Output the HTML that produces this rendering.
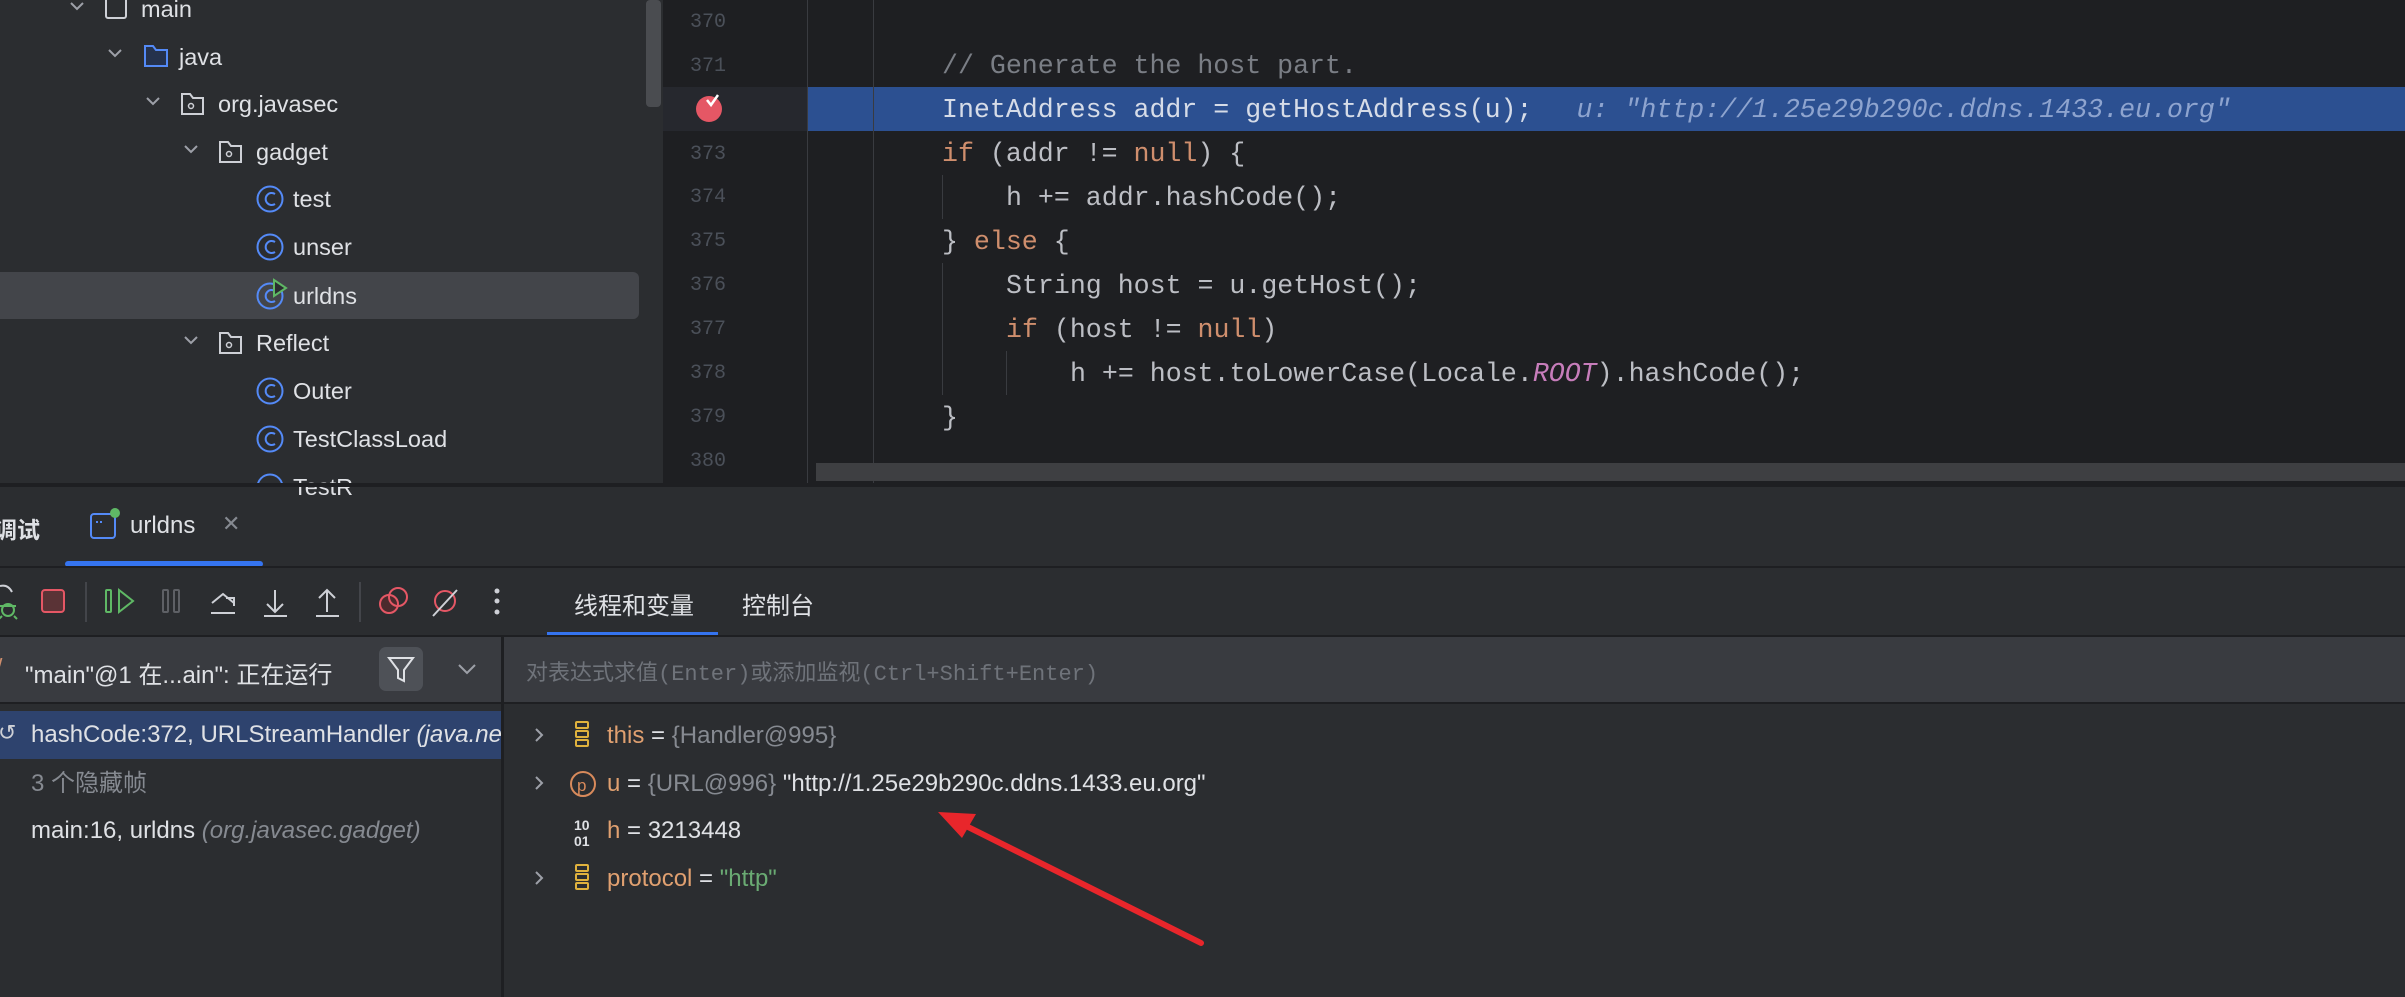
<!DOCTYPE html>
<html><head><meta charset="utf-8"><style>
*{margin:0;padding:0;box-sizing:border-box}
body{width:2405px;height:997px;background:#2b2d30;position:relative;overflow:hidden;font-family:"Liberation Sans","Noto Sans CJK SC",sans-serif;color:#dfe1e5}
.a{position:absolute;white-space:nowrap}
.t{font-size:23.5px;line-height:48px;height:48px}
.mono{font-family:"Liberation Mono","Noto Sans CJK SC",monospace;font-size:26.6px;line-height:44px}
.ln{font-family:"Liberation Mono",monospace;font-size:20px;color:#4b5059;width:60px;text-align:right;left:666px;line-height:44px}
.kw{color:#cf8e6d}.cm{color:#7a7e85}
.v{font-size:24px;line-height:40px}
</style></head><body>
<div class="a" style="left:0;top:0;width:663px;height:483px;background:#2b2d30"></div>
<div class="a" style="left:646px;top:0;width:15px;height:107px;background:#4a4c50;border-radius:4px"></div>
<div class="a" style="left:0;top:272px;width:639px;height:47px;background:#43454a;border-radius:0 6px 6px 0"></div>
<svg class="a" style="left:0;top:0" width="640" height="483" fill="none" stroke-width="2">
 <g stroke="#9da0a8"><path d="M71 3l6 6 6-6"/><path d="M109 50l6 6 6-6"/><path d="M147 98l6 6 6-6"/><path d="M185 146l6 6 6-6"/><path d="M185 337l6 6 6-6"/></g>
 <rect x="106" y="-4" width="20" height="22" rx="2" stroke="#ced0d6"/>
 <path d="M145 46h8l3 4h11v16h-22z" stroke="#548af7" fill="#25324d"/>
 <path d="M182 94h8l3 4h10v16h-21z" stroke="#ced0d6"/><circle cx="191" cy="106" r="2.5" stroke="#ced0d6" stroke-width="1.5"/>
 <path d="M220 142h8l3 4h10v16h-21z" stroke="#ced0d6"/><circle cx="229" cy="154" r="2.5" stroke="#ced0d6" stroke-width="1.5"/>
 <path d="M220 333h8l3 4h10v16h-21z" stroke="#ced0d6"/><circle cx="229" cy="345" r="2.5" stroke="#ced0d6" stroke-width="1.5"/>
 <g stroke="#548af7"><circle cx="270" cy="199" r="12.5"/><circle cx="270" cy="247" r="12.5"/><circle cx="270" cy="296" r="12.5"/><circle cx="270" cy="391" r="12.5"/><circle cx="270" cy="439" r="12.5"/><circle cx="270" cy="487" r="12.5"/>
 <path d="M275 194a6 6 0 1 0 0 10M275 242a6 6 0 1 0 0 10M275 291a6 6 0 1 0 0 10M275 386a6 6 0 1 0 0 10M275 434a6 6 0 1 0 0 10"/></g>
 <path d="M274 280l12 8-12 8z" fill="#2b2d30" stroke="#5fb865"/>
</svg>
<div class="a t" style="left:141px;top:-15px">main</div>
<div class="a t" style="left:179px;top:33px">java</div>
<div class="a t" style="left:218px;top:80px">org.javasec</div>
<div class="a t" style="left:256px;top:128px">gadget</div>
<div class="a t" style="left:293px;top:175px">test</div>
<div class="a t" style="left:293px;top:223px">unser</div>
<div class="a t" style="left:293px;top:272px">urldns</div>
<div class="a t" style="left:256px;top:319px">Reflect</div>
<div class="a t" style="left:293px;top:367px">Outer</div>
<div class="a t" style="left:293px;top:415px">TestClassLoad</div>
<div class="a t" style="left:293px;top:463px">TestR</div>
<div class="a" style="left:663px;top:0;width:1742px;height:483px;background:#1e1f22"></div>
<div class="a" style="left:663px;top:87px;width:145px;height:44px;background:#26282e"></div>
<div class="a" style="left:808px;top:87px;width:1597px;height:44px;background:#2c5091"></div>
<div class="a" style="left:807px;top:0;width:1px;height:483px;background:#393b40"></div>
<div class="a" style="left:873px;top:0;width:1px;height:483px;background:#393b40"></div>
<div class="a" style="left:942px;top:175px;width:1px;height:44px;background:#393b40"></div>
<div class="a" style="left:942px;top:263px;width:1px;height:132px;background:#393b40"></div>
<div class="a" style="left:1006px;top:351px;width:1px;height:44px;background:#393b40"></div>
<div class="a" style="left:816px;top:463px;width:1589px;height:18px;background:#3e3f42"></div>
<div class="a ln" style="top:1px">370</div>
<div class="a ln" style="top:45px">371</div>
<div class="a ln" style="top:133px">373</div>
<div class="a ln" style="top:176px">374</div>
<div class="a ln" style="top:220px">375</div>
<div class="a ln" style="top:264px">376</div>
<div class="a ln" style="top:308px">377</div>
<div class="a ln" style="top:352px">378</div>
<div class="a ln" style="top:396px">379</div>
<div class="a ln" style="top:440px">380</div>
<svg class="a" style="left:692px;top:92px" width="34" height="34"><circle cx="17" cy="17" r="13" fill="#e55765"/><path d="M15 8l4 5 7-10" stroke="#fff" stroke-width="2.5" fill="none"/></svg>
<div class="a mono cm" style="left:942px;top:44px">// Generate the host part.</div>
<div class="a mono" style="left:942px;top:88px;color:#d6dce8">InetAddress addr = getHostAddress(u);<span style="font-style:italic;color:#8ea4cf;margin-left:44px">u: "http://1.25e29b290c.ddns.1433.eu.org"</span></div>
<div class="a mono" style="left:942px;top:132px;color:#bcbec4"><span class="kw">if</span> (addr != <span class="kw">null</span>) {</div>
<div class="a mono" style="left:1006px;top:176px;color:#bcbec4">h += addr.hashCode();</div>
<div class="a mono" style="left:942px;top:220px;color:#bcbec4">} <span class="kw">else</span> {</div>
<div class="a mono" style="left:1006px;top:264px;color:#bcbec4">String host = u.getHost();</div>
<div class="a mono" style="left:1006px;top:308px;color:#bcbec4"><span class="kw">if</span> (host != <span class="kw">null</span>)</div>
<div class="a mono" style="left:1070px;top:352px;color:#bcbec4">h += host.toLowerCase(Locale.<span style="color:#c77dbb;font-style:italic">ROOT</span>).hashCode();</div>
<div class="a mono" style="left:942px;top:396px;color:#bcbec4">}</div>
<div class="a" style="left:0;top:483px;width:2405px;height:4px;background:#1e1f22"></div>
<div class="a" style="left:-6px;top:511px;font-size:23px;font-weight:bold">调试</div>
<svg class="a" style="left:88px;top:506px" width="34" height="36" fill="none"><rect x="3" y="8" width="24" height="24" rx="3" stroke="#548af7" stroke-width="2"/><path d="M8 16h2M12 16h2" stroke="#548af7" stroke-width="2"/><circle cx="27" cy="7" r="5" fill="#5fb865"/></svg>
<div class="a" style="left:130px;top:512px;font-size:24px">urldns</div>
<div class="a" style="left:222px;top:511px;font-size:22px;color:#868a91">✕</div>
<div class="a" style="left:65px;top:561px;width:198px;height:6px;background:#3574f0;border-radius:3px"></div>
<div class="a" style="left:0;top:566px;width:2405px;height:2px;background:#1e1f22"></div>
<svg class="a" style="left:0;top:580px" width="520" height="44" fill="none" stroke-width="2">
 <path d="M0 6q8-2 12 6" stroke="#ced0d6"/><circle cx="8" cy="30" r="6" stroke="#5fb865"/><path d="M0 26h16M2 36l-3 3M14 36l3 3" stroke="#5fb865"/>
 <rect x="42" y="10" width="22" height="22" rx="3" stroke="#e55765" fill="#5a3336"/>
 <path d="M86 2v40" stroke="#43454a"/>
 <rect x="106" y="10" width="5" height="22" rx="1" stroke="#5fb865"/><path d="M119 10l14 11-14 11z" stroke="#5fb865"/>
 <rect x="163" y="10" width="5" height="22" rx="1" stroke="#5e6065"/><rect x="174" y="10" width="5" height="22" rx="1" stroke="#5e6065"/>
 <path d="M212 23l11-9 11 9M211 33h24M226 18h8v8" stroke="#ced0d6"/>
 <path d="M275 10v22M267 24l8 8 8-8M264 36h23" stroke="#ced0d6"/>
 <path d="M327 32V10M319 18l8-8 8 8M316 36h23" stroke="#ced0d6"/>
 <path d="M360 2v40" stroke="#43454a"/>
 <circle cx="389" cy="24" r="9" stroke="#e55765" fill="#4b2a2d"/><circle cx="398" cy="17" r="9" stroke="#e55765"/>
 <circle cx="445" cy="21" r="10" stroke="#e55765"/><path d="M433 36l24-26" stroke="#ced0d6"/>
 <circle cx="497" cy="11" r="2.5" fill="#ced0d6" stroke="none"/><circle cx="497" cy="21" r="2.5" fill="#ced0d6" stroke="none"/><circle cx="497" cy="32" r="2.5" fill="#ced0d6" stroke="none"/>
</svg>
<div class="a" style="left:574px;top:586px;font-size:24px">线程和变量</div>
<div class="a" style="left:742px;top:586px;font-size:24px">控制台</div>
<div class="a" style="left:547px;top:632px;width:171px;height:5px;background:#3574f0"></div>
<div class="a" style="left:0;top:635px;width:2405px;height:2px;background:#1e1f22"></div>
<div class="a" style="left:0;top:637px;width:2405px;height:65px;background:#393b40"></div>
<div class="a" style="left:0;top:702px;width:2405px;height:2px;background:#1e1f22"></div>
<div class="a" style="left:501px;top:637px;width:3px;height:360px;background:#1e1f22"></div>
<div class="a" style="left:-4px;top:654px;font-size:23px;color:#cf8e6d">/</div>
<div class="a" style="left:25px;top:655px;font-size:24px">"main"@1 在...ain": 正在运行</div>
<div class="a" style="left:379px;top:647px;width:44px;height:44px;background:#4e5157;border-radius:7px"></div>
<svg class="a" style="left:379px;top:647px" width="44" height="44" fill="none"><path d="M10 11h24l-9 12v11l-6-3v-8z" stroke="#dfe1e5" stroke-width="2"/></svg>
<svg class="a" style="left:456px;top:661px" width="22" height="16" fill="none"><path d="M3 4l8 8 8-8" stroke="#9da0a8" stroke-width="2"/></svg>
<div class="a" style="left:526px;top:655px;font-family:'Liberation Mono','Noto Sans CJK SC',monospace;font-size:22px;color:#6f737a">对表达式求值(Enter)或添加监视(Ctrl+Shift+Enter)</div>
<div class="a" style="left:0;top:711px;width:501px;height:48px;background:#2e436e;overflow:hidden">
<div class="a v" style="left:31px;top:4px">hashCode:372, URLStreamHandler <i>(java.net)</i></div></div>
<div class="a" style="left:-2px;top:720px;font-size:22px;color:#ced0d6">↺</div>
<div class="a v" style="left:31px;top:764px;color:#868a91">3 个隐藏帧</div>
<div class="a v" style="left:31px;top:811px">main:16, urldns <i style="color:#868a91">(org.javasec.gadget)</i></div>
<svg class="a" style="left:530px;top:715px" width="90" height="190" fill="none" stroke-width="2">
 <g stroke="#9da0a8"><path d="M6 14l6 6-6 6M6 62l6 6-6 6M6 157l6 6-6 6"/></g>
 <g stroke="#e0b23d"><rect x="46" y="7" width="12" height="6" rx="1"/><rect x="46" y="16" width="12" height="6" rx="1"/><rect x="46" y="25" width="12" height="6" rx="1"/>
 <rect x="46" y="150" width="12" height="6" rx="1"/><rect x="46" y="159" width="12" height="6" rx="1"/><rect x="46" y="168" width="12" height="6" rx="1"/></g>
 <circle cx="53" cy="69" r="12" stroke="#d88a5b"/>
 <text x="47" y="76" font-size="17" fill="#d88a5b" font-family="Liberation Sans">p</text>
 <text x="44" y="115" font-size="14" fill="#dfe1e5" font-family="Liberation Sans" font-weight="bold">10</text>
 <text x="44" y="131" font-size="14" fill="#dfe1e5" font-family="Liberation Sans" font-weight="bold">01</text>
</svg>
<div class="a v" style="left:607px;top:716px"><span style="color:#e0a070">this</span> = <span style="color:#868a91">{Handler@995}</span></div>
<div class="a v" style="left:607px;top:764px"><span style="color:#e0a070">u</span> = <span style="color:#868a91">{URL@996}</span> "http://1.25e29b290c.ddns.1433.eu.org"</div>
<div class="a v" style="left:607px;top:811px"><span style="color:#e0a070">h</span> = 3213448</div>
<div class="a v" style="left:607px;top:859px"><span style="color:#e0a070">protocol</span> = <span style="color:#6aab73">"http"</span></div>
<svg class="a" style="left:0;top:0" width="2405" height="997"><path d="M1201 943L950 818" stroke="#e8262b" stroke-width="6" stroke-linecap="round"/><path d="M938 812l38 2l-14 24z" fill="#e8262b"/></svg>
</body></html>
